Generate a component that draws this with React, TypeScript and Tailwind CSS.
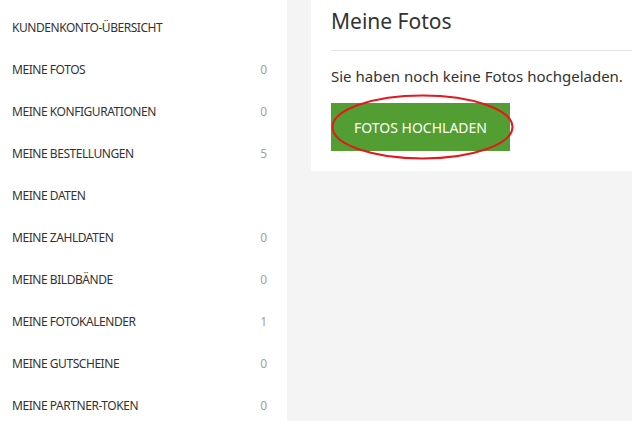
const items: { label: string; count?: number }[] = [
  { label: 'KUNDENKONTO-ÜBERSICHT' },
  { label: 'MEINE FOTOS', count: 0 },
  { label: 'MEINE KONFIGURATIONEN', count: 0 },
  { label: 'MEINE BESTELLUNGEN', count: 5 },
  { label: 'MEINE DATEN' },
  { label: 'MEINE ZAHLDATEN', count: 0 },
  { label: 'MEINE BILDBÄNDE', count: 0 },
  { label: 'MEINE FOTOKALENDER', count: 1 },
  { label: 'MEINE GUTSCHEINE', count: 0 },
  { label: 'MEINE PARTNER-TOKEN', count: 0 },
]

export default function App() {
  return (
    <div
      className="flex w-[632px] h-[421px] overflow-hidden bg-[#f4f4f4] text-[#333]"
      style={{ fontFamily: '"Noto Sans", "Open Sans", sans-serif' }}
    >
      {/* Sidebar */}
      <nav className="w-[287px] shrink-0 bg-white pt-[7px]">
        {items.map(item => (
          <div key={item.label} className="flex items-center justify-between h-[42px] pl-3 pr-[20px]">
            <span className="text-[12px] tracking-[-0.45px]">{item.label}</span>
            {item.count !== undefined && (
              <span className="text-[12px] text-[#a0a0a6]">{item.count}</span>
            )}
          </div>
        ))}
      </nav>

      {/* Content */}
      <div className="flex-1 pl-[24px]">
        <div className="bg-white h-[171px] pl-[20px]">
          <h1 className="text-[21px] leading-none pt-[11px] pb-[18px] border-b border-[#e6e6e6]">Meine Fotos</h1>
          <p className="text-[15px] mt-[15px] leading-5">Sie haben noch keine Fotos hochgeladen.</p>
          <div className="relative mt-[17px] w-[179px]">
            <button className="w-[179px] h-[48px] bg-[#529e32] text-white text-[14px]">FOTOS HOCHLADEN</button>
            <svg className="absolute left-0 top-[-9px] pointer-events-none" width="184" height="66" viewBox="0 0 184 66">
              <ellipse cx="91.5" cy="33" rx="90" ry="31.5" fill="none" stroke="#e3191e" strokeWidth="2" />
            </svg>
          </div>
        </div>
      </div>
    </div>
  )
}
